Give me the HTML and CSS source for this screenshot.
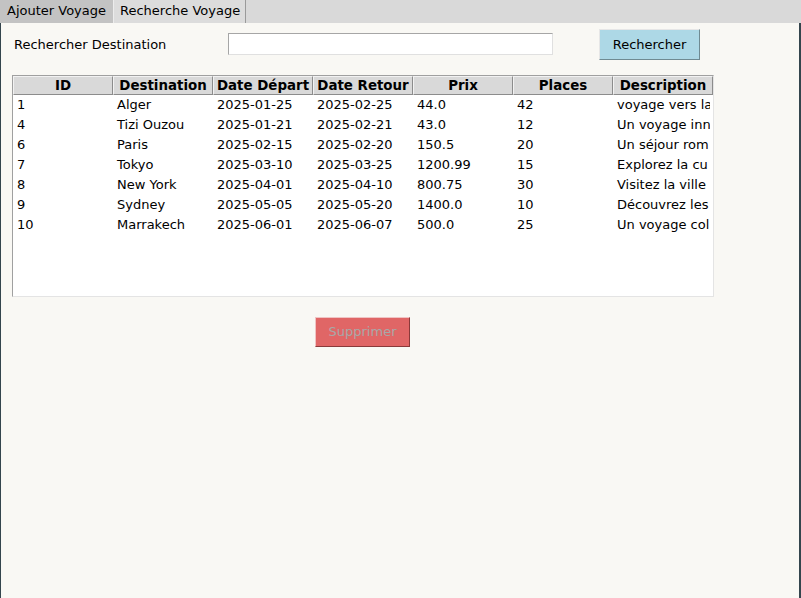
FILE: index.html
```html
<!DOCTYPE html>
<html>
<head>
<meta charset="utf-8">
<link rel="stylesheet" href="styles.css">
</head>
<body>
<div class="tabs">
  <div class="tab tab-off">Ajouter Voyage</div>
  <div class="tab tab-on">Recherche Voyage</div>
</div>
<div class="panel">
  <div class="search-row">
    <div class="label">Rechercher Destination</div>
    <div class="entry"></div>
    <div class="btn-search">Rechercher</div>
  </div>
  <div class="table">
    <div class="row head">
      <div class="hc">ID</div><div class="hc">Destination</div><div class="hc">Date Départ</div><div class="hc">Date Retour</div><div class="hc">Prix</div><div class="hc">Places</div><div class="hc">Description</div>
    </div>
    <div class="row"><div class="c">1</div><div class="c">Alger</div><div class="c">2025-01-25</div><div class="c">2025-02-25</div><div class="c">44.0</div><div class="c">42</div><div class="c">voyage vers la</div></div>
    <div class="row"><div class="c">4</div><div class="c">Tizi Ouzou</div><div class="c">2025-01-21</div><div class="c">2025-02-21</div><div class="c">43.0</div><div class="c">12</div><div class="c">Un voyage inn</div></div>
    <div class="row"><div class="c">6</div><div class="c">Paris</div><div class="c">2025-02-15</div><div class="c">2025-02-20</div><div class="c">150.5</div><div class="c">20</div><div class="c">Un séjour rom</div></div>
    <div class="row"><div class="c">7</div><div class="c">Tokyo</div><div class="c">2025-03-10</div><div class="c">2025-03-25</div><div class="c">1200.99</div><div class="c">15</div><div class="c">Explorez la cu</div></div>
    <div class="row"><div class="c">8</div><div class="c">New York</div><div class="c">2025-04-01</div><div class="c">2025-04-10</div><div class="c">800.75</div><div class="c">30</div><div class="c">Visitez la ville</div></div>
    <div class="row"><div class="c">9</div><div class="c">Sydney</div><div class="c">2025-05-05</div><div class="c">2025-05-20</div><div class="c">1400.0</div><div class="c">10</div><div class="c">Découvrez les</div></div>
    <div class="row"><div class="c">10</div><div class="c">Marrakech</div><div class="c">2025-06-01</div><div class="c">2025-06-07</div><div class="c">500.0</div><div class="c">25</div><div class="c">Un voyage col</div></div>
  </div>
  <div class="del-row">
    <div class="btn-del">Supprimer</div>
  </div>
</div>
</body>
</html>
```

FILE: styles.css
```css
html, body {
  margin: 0;
  padding: 0;
  height: 100%;
}
body {
  font-family: "DejaVu Sans", sans-serif;
  font-size: 13px;
  color: #000;
  background: #f9f8f4;
  display: flex;
  flex-direction: column;
}
.tabs {
  height: 23px;
  background: #d9d9d9;
  display: flex;
  align-items: stretch;
  flex: none;
}
.tab {
  padding: 0 0 0 7px;
  line-height: 22px;
  box-sizing: border-box;
  white-space: nowrap;
}
.tab-off {
  background: #c3c3c3;
  width: 113px;
}
.tab-on {
  background: #dcdcdc;
  width: 133px;
  padding-left: 6px;
  border-left: 1px solid #ececec;
  border-right: 1px solid #9a9a9a;
}
.panel {
  flex: 1;
  border-left: 1px solid #34454d;
  border-right: 2px solid #34454d;
  padding: 0 0 0 11px;
}
.search-row {
  display: flex;
  align-items: center;
  height: 42px;
}
.label {
  width: 214px;
  padding-left: 2px;
}
.entry {
  width: 323px;
  height: 20px;
  background: #fff;
  border: 1px solid #a6a6a6;
  border-right-color: #e0e0e0;
  border-bottom-color: #e0e0e0;
}
.btn-search {
  margin-left: 46px;
  width: 101px;
  height: 31px;
  line-height: 29px;
  text-align: center;
  background: #add8e6;
  border: 1px solid #e6e6e6;
  border-right-color: #6f8a92;
  border-bottom-color: #6f8a92;
  box-sizing: border-box;
}
.table {
  margin-top: 10px;
  width: 702px;
  height: 222px;
  background: #fff;
  border: 1px solid #a0a0a0;
  border-right-color: #e4e4e4;
  border-bottom-color: #e4e4e4;
  box-sizing: border-box;
  overflow: hidden;
}
.row {
  display: grid;
  grid-template-columns: repeat(6, 100px) 97px;
  height: 20px;
}
.row.head {
  height: 19px;
  grid-template-columns: repeat(7, 100px);
}
.hc {
  background: #d9d9d9;
  font-weight: bold;
  font-size: 13.4px;
  text-align: center;
  line-height: 17px;
  border: 1px solid #f2f2f2;
  border-right-color: #8c8c8c;
  border-bottom-color: #8c8c8c;
  box-sizing: border-box;
  white-space: nowrap;
  overflow: hidden;
}
.c {
  padding-left: 4px;
  line-height: 20px;
  white-space: nowrap;
  overflow: hidden;
}
.del-row {
  padding-left: 303px;
  margin-top: 20px;
}
.btn-del {
  width: 95px;
  height: 30px;
  line-height: 28px;
  text-align: center;
  background: #e06666;
  color: #a8a8a8;
  border: 1px solid #f0c4c4;
  border-right-color: #8a3a3a;
  border-bottom-color: #8a3a3a;
  box-sizing: border-box;
}
```
